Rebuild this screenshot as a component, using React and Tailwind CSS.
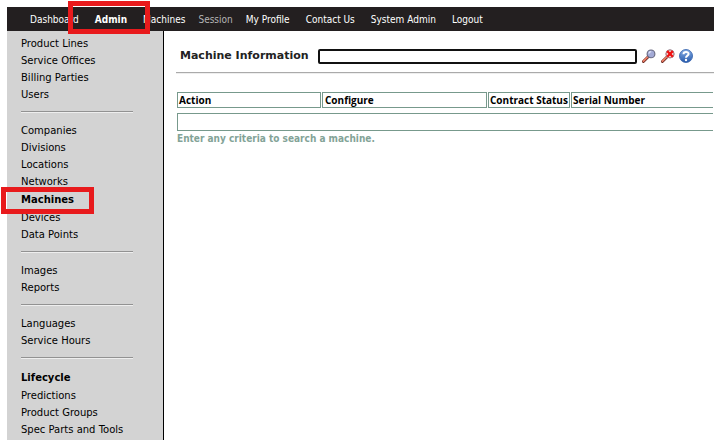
import React from 'react';

const navItems = [
  { label: 'Dashboard' },
  { label: 'Admin', active: true },
  { label: 'Machines' },
  { label: 'Session', muted: true },
  { label: 'My Profile' },
  { label: 'Contact Us' },
  { label: 'System Admin' },
  { label: 'Logout' },
];

const menuGroups = [
  ['Product Lines', 'Service Offices', 'Billing Parties', 'Users'],
  ['Companies', 'Divisions', 'Locations', 'Networks', 'Machines', 'Devices', 'Data Points'],
  ['Images', 'Reports'],
  ['Languages', 'Service Hours'],
  ['Lifecycle', 'Predictions', 'Product Groups', 'Spec Parts and Tools'],
];

const SearchIcon = ({ clear }) => (
  <svg viewBox="0 0 14 14" className="w-[14px] h-[14px]" aria-hidden="true">
    <path d="M1.4 12.6 L6 8" stroke="#6b2a24" strokeWidth="2.8" strokeLinecap="round" />
    <path d="M1.4 12.2 L5.6 8" stroke="#ee7f66" strokeWidth="1.7" strokeLinecap="round" />
    <circle cx="9" cy="4.9" r="3.9" fill="#a3aad6" stroke="#66677e" strokeWidth="1.1" />
    <path d="M6.8 4.6 A2.4 2.4 0 0 1 9.2 2.6" stroke="#dfe4f8" strokeWidth="1.1" fill="none" />
    {clear && (
      <>
        <circle cx="9" cy="4.9" r="3.9" fill="#f6e2e2" stroke="#b56a6a" strokeWidth="0.8" />
        <path d="M6.2 2.1 L11.8 7.7 M11.8 2.1 L6.2 7.7" stroke="#f01010" strokeWidth="2.3" />
      </>
    )}
  </svg>
);

const HelpIcon = () => (
  <svg viewBox="0 0 14 14" className="w-[14px] h-[14px]" aria-hidden="true">
    <defs>
      <linearGradient id="help" x1="0" y1="0" x2="0" y2="1">
        <stop offset="0" stopColor="#86aee6" />
        <stop offset="1" stopColor="#2659ab" />
      </linearGradient>
    </defs>
    <circle cx="7" cy="7" r="6.5" fill="url(#help)" stroke="#2c5ca8" strokeWidth="0.8" />
    <path d="M4.5 5.2 C4.5 2.3 9.6 2.3 9.6 5 C9.6 6.7 7 6.6 7 8.8" stroke="#fff" strokeWidth="2" fill="none" />
    <circle cx="7" cy="11" r="1.2" fill="#fff" />
  </svg>
);

const Sidebar = () => (
  <nav className="w-[157px] shrink-0 bg-[#d3d3d3] border-r border-black pl-[14px] pt-1 text-[10px] leading-[17px]">
    {menuGroups.map((group, i) => (
      <div key={group[0]}>
        {i > 0 && <hr className="mt-2 mb-[9px] w-[112px] border-t border-b border-t-[#929292] border-b-[#eeeeee]" />}
        <ul>
          {group.map((item) => {
            const strong = item === 'Machines' || item === 'Lifecycle';
            return (
              <li key={item} className={strong ? 'relative font-bold leading-[19px]' : ''}>
                <a href="#" className="block whitespace-nowrap">{item}</a>
                {item === 'Machines' && (
                  <span className="absolute -left-5 -top-[3px] w-[93px] h-[27px] border-5 border-[#e81a1c] pointer-events-none" />
                )}
              </li>
            );
          })}
        </ul>
      </div>
    ))}
  </nav>
);

const MachineTable = () => (
  <table className="w-full mt-[13px] border-separate border-spacing-x-px border-spacing-y-[5px] table-fixed text-[10px] leading-[14px] font-['Open_Sans',sans-serif]">
    <thead>
      <tr className="text-left">
        <th className="w-[144px] border border-[#77998c] px-px">Action</th>
        <th className="w-[165px] border border-[#77998c] px-[2px]">Configure</th>
        <th className="w-[82px] border border-[#77998c] px-px whitespace-nowrap">Contract Status</th>
        <th className="border border-r-0 border-[#77998c] px-px">Serial Number</th>
      </tr>
    </thead>
    <tbody>
      <tr>
        <td colSpan={4} className="h-[18px] border border-r-0 border-[#77998c]"></td>
      </tr>
    </tbody>
  </table>
);

const App = () => {
  return (
    <div className="min-h-screen flex flex-col bg-white pl-[7px] pt-[7px] text-black font-['DejaVu_Sans',sans-serif]">
      {/* Top navigation */}
      <nav className="h-6 bg-[#231f20] text-white text-[10px] font-['DejaVu_Sans_Condensed','Open_Sans',sans-serif]">
        <ul className="flex h-full items-center gap-4 pl-[23px]">
          {navItems.map(({ label, active, muted }) => (
            <li key={label} className={active ? 'relative font-bold' : muted ? '-mx-[3px] text-[#b5b5b5]' : ''}>
              <a href="#" className="whitespace-nowrap">{label}</a>
              {active && (
                <span className="absolute -left-[27px] -top-[11px] w-[82px] h-[33px] border-5 border-[#e81a1c] pointer-events-none z-10" />
              )}
            </li>
          ))}
        </ul>
      </nav>

      <div className="flex flex-1">
        <Sidebar />
        <main className="flex-1 min-w-0 pl-3 pt-[17px]">
          <form className="flex items-center pl-1">
            <label htmlFor="search" className="text-[11px] font-bold text-[#222] whitespace-nowrap">Machine Information</label>
            <input id="search" type="text" className="ml-[9px] w-[319px] h-[15px] border-2 border-[#111] rounded-xs bg-white px-1 text-[11px] outline-none" />
            <button type="button" aria-label="Search" className="ml-[5px]"><SearchIcon /></button>
            <button type="button" aria-label="Clear search" className="ml-[5px]"><SearchIcon clear /></button>
            <button type="button" aria-label="Help" className="ml-1"><HelpIcon /></button>
          </form>
          <hr className="mt-[7px] border-t border-b border-t-[#aaaaaa] border-b-[#eeeeee]" />
          <MachineTable />
          <p className="-mt-1 pl-px text-[10px] leading-[14px] font-bold text-[#83a397] font-['DejaVu_Sans_Condensed',sans-serif]">Enter any criteria to search a machine.</p>
        </main>
      </div>
    </div>
  );
};

export default App;
